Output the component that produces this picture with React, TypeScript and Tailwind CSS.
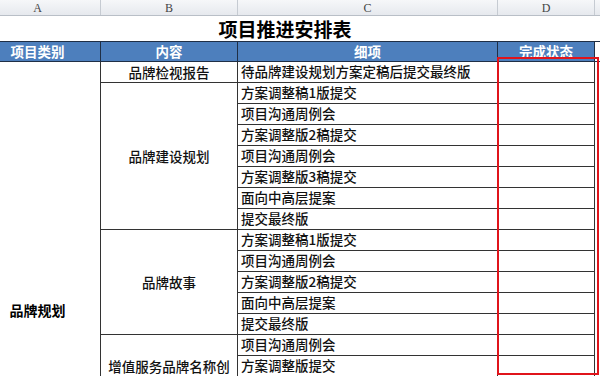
import React from "react";

const cjk = { fontFamily: '"Noto Sans CJK SC", "Noto Sans", sans-serif' };

const groups: { label: string; items: string[]; extra?: boolean }[] = [
  { label: "品牌检视报告", items: ["待品牌建设规划方案定稿后提交最终版"] },
  {
    label: "品牌建设规划",
    items: [
      "方案调整稿1版提交",
      "项目沟通周例会",
      "方案调整版2稿提交",
      "项目沟通周例会",
      "方案调整版3稿提交",
      "面向中高层提案",
      "提交最终版",
    ],
  },
  {
    label: "品牌故事",
    items: ["方案调整稿1版提交", "项目沟通周例会", "方案调整版2稿提交", "面向中高层提案", "提交最终版"],
  },
  { label: "增值服务品牌名称创", items: ["项目沟通周例会", "方案调整版提交"], extra: true },
];

export default function App() {
  let row = 1;
  const cells: React.ReactNode[] = [];
  groups.forEach((g, gi) => {
    const start = row;
    const span = g.items.length;
    cells.push(
      <div
        key={`b${gi}`}
        className={`col-start-2 flex justify-center border-r border-[#333] text-[13.5px] font-medium text-[#111] ${
          g.extra ? "items-end" : "items-center border-b"
        }`}
        style={{ gridRow: `${start} / span ${span}` }}
      >
        <span className={g.extra ? "h-[21px] leading-[21px]" : "leading-[21px]"}>{g.label}</span>
      </div>
    );
    g.items.forEach((it, ii) => {
      const r = start + ii;
      cells.push(
        <div
          key={`c${gi}-${ii}`}
          className="col-start-3 flex items-center border-b border-r border-[#333] pl-[3px] text-[13.5px] font-medium text-[#111] leading-none whitespace-nowrap"
          style={{ gridRow: `${r}` }}
        >
          {it}
        </div>
      );
      cells.push(
        <div
          key={`d${gi}-${ii}`}
          className="col-start-4 border-b border-r border-[#333]"
          style={{ gridRow: `${r}` }}
        />
      );
    });
    row += span;
  });

  return (
    <div className="relative h-[376px] w-[600px] overflow-hidden bg-white" style={cjk}>
      {/* column letters */}
      <div
        className="flex h-[16px] border-b border-[#b9bfc7] bg-gradient-to-b from-[#f6f7f9] to-[#e6e9ee] text-[12px] text-[#444]"
        style={{ fontFamily: '"Liberation Serif", serif' }}
      >
        <div className="flex w-[101px] items-center border-r border-[#c6cbd2] pr-[25px] justify-center">A</div>
        <div className="flex w-[137px] items-center justify-center border-r border-[#c6cbd2]">B</div>
        <div className="flex w-[260px] items-center justify-center border-r border-[#c6cbd2]">C</div>
        <div className="flex w-[97px] items-center justify-center border-r border-[#c6cbd2]">D</div>
        <div className="flex-1" />
      </div>

      {/* title */}
      <div className="flex h-[25px] items-center">
        <div className="w-[570px] text-center text-[19px] font-bold leading-none text-black">项目推进安排表</div>
      </div>

      {/* header */}
      <div className="flex h-[21px] border-y border-[#1f2f46] text-[13.5px] font-bold text-white">
        <div className="flex w-[101px] items-center justify-center border-r border-[#1f2f46] bg-[#4d7fbd] pr-[25px]">
          项目类别
        </div>
        <div className="flex w-[137px] items-center justify-center border-r border-[#1f2f46] bg-[#4d7fbd]">内容</div>
        <div className="flex w-[260px] items-center justify-center border-r border-[#1f2f46] bg-[#4d7fbd]">细项</div>
        <div className="flex w-[97px] items-center justify-center border-r border-[#1f2f46] bg-[#4d7fbd]">
          完成状态
        </div>
        <div className="flex-1" />
      </div>

      {/* body */}
      <div
        className="grid"
        style={{ gridTemplateColumns: "101px 137px 260px 97px 1fr", gridTemplateRows: "repeat(15, 21px)" }}
      >
        <div
          className="col-start-1 flex justify-center border-r border-[#333] pr-[25px] pt-[238px] text-[14px] font-bold text-black"
          style={{ gridRow: "1 / span 15" }}
        >
          <span className="leading-[20px]">品牌规划</span>
        </div>
        {cells}
      </div>

      {/* red highlight */}
      <div className="absolute left-[497px] top-[57px] h-[318px] w-[102px] border-[2.5px] border-[#e0141b]" />
    </div>
  );
}
